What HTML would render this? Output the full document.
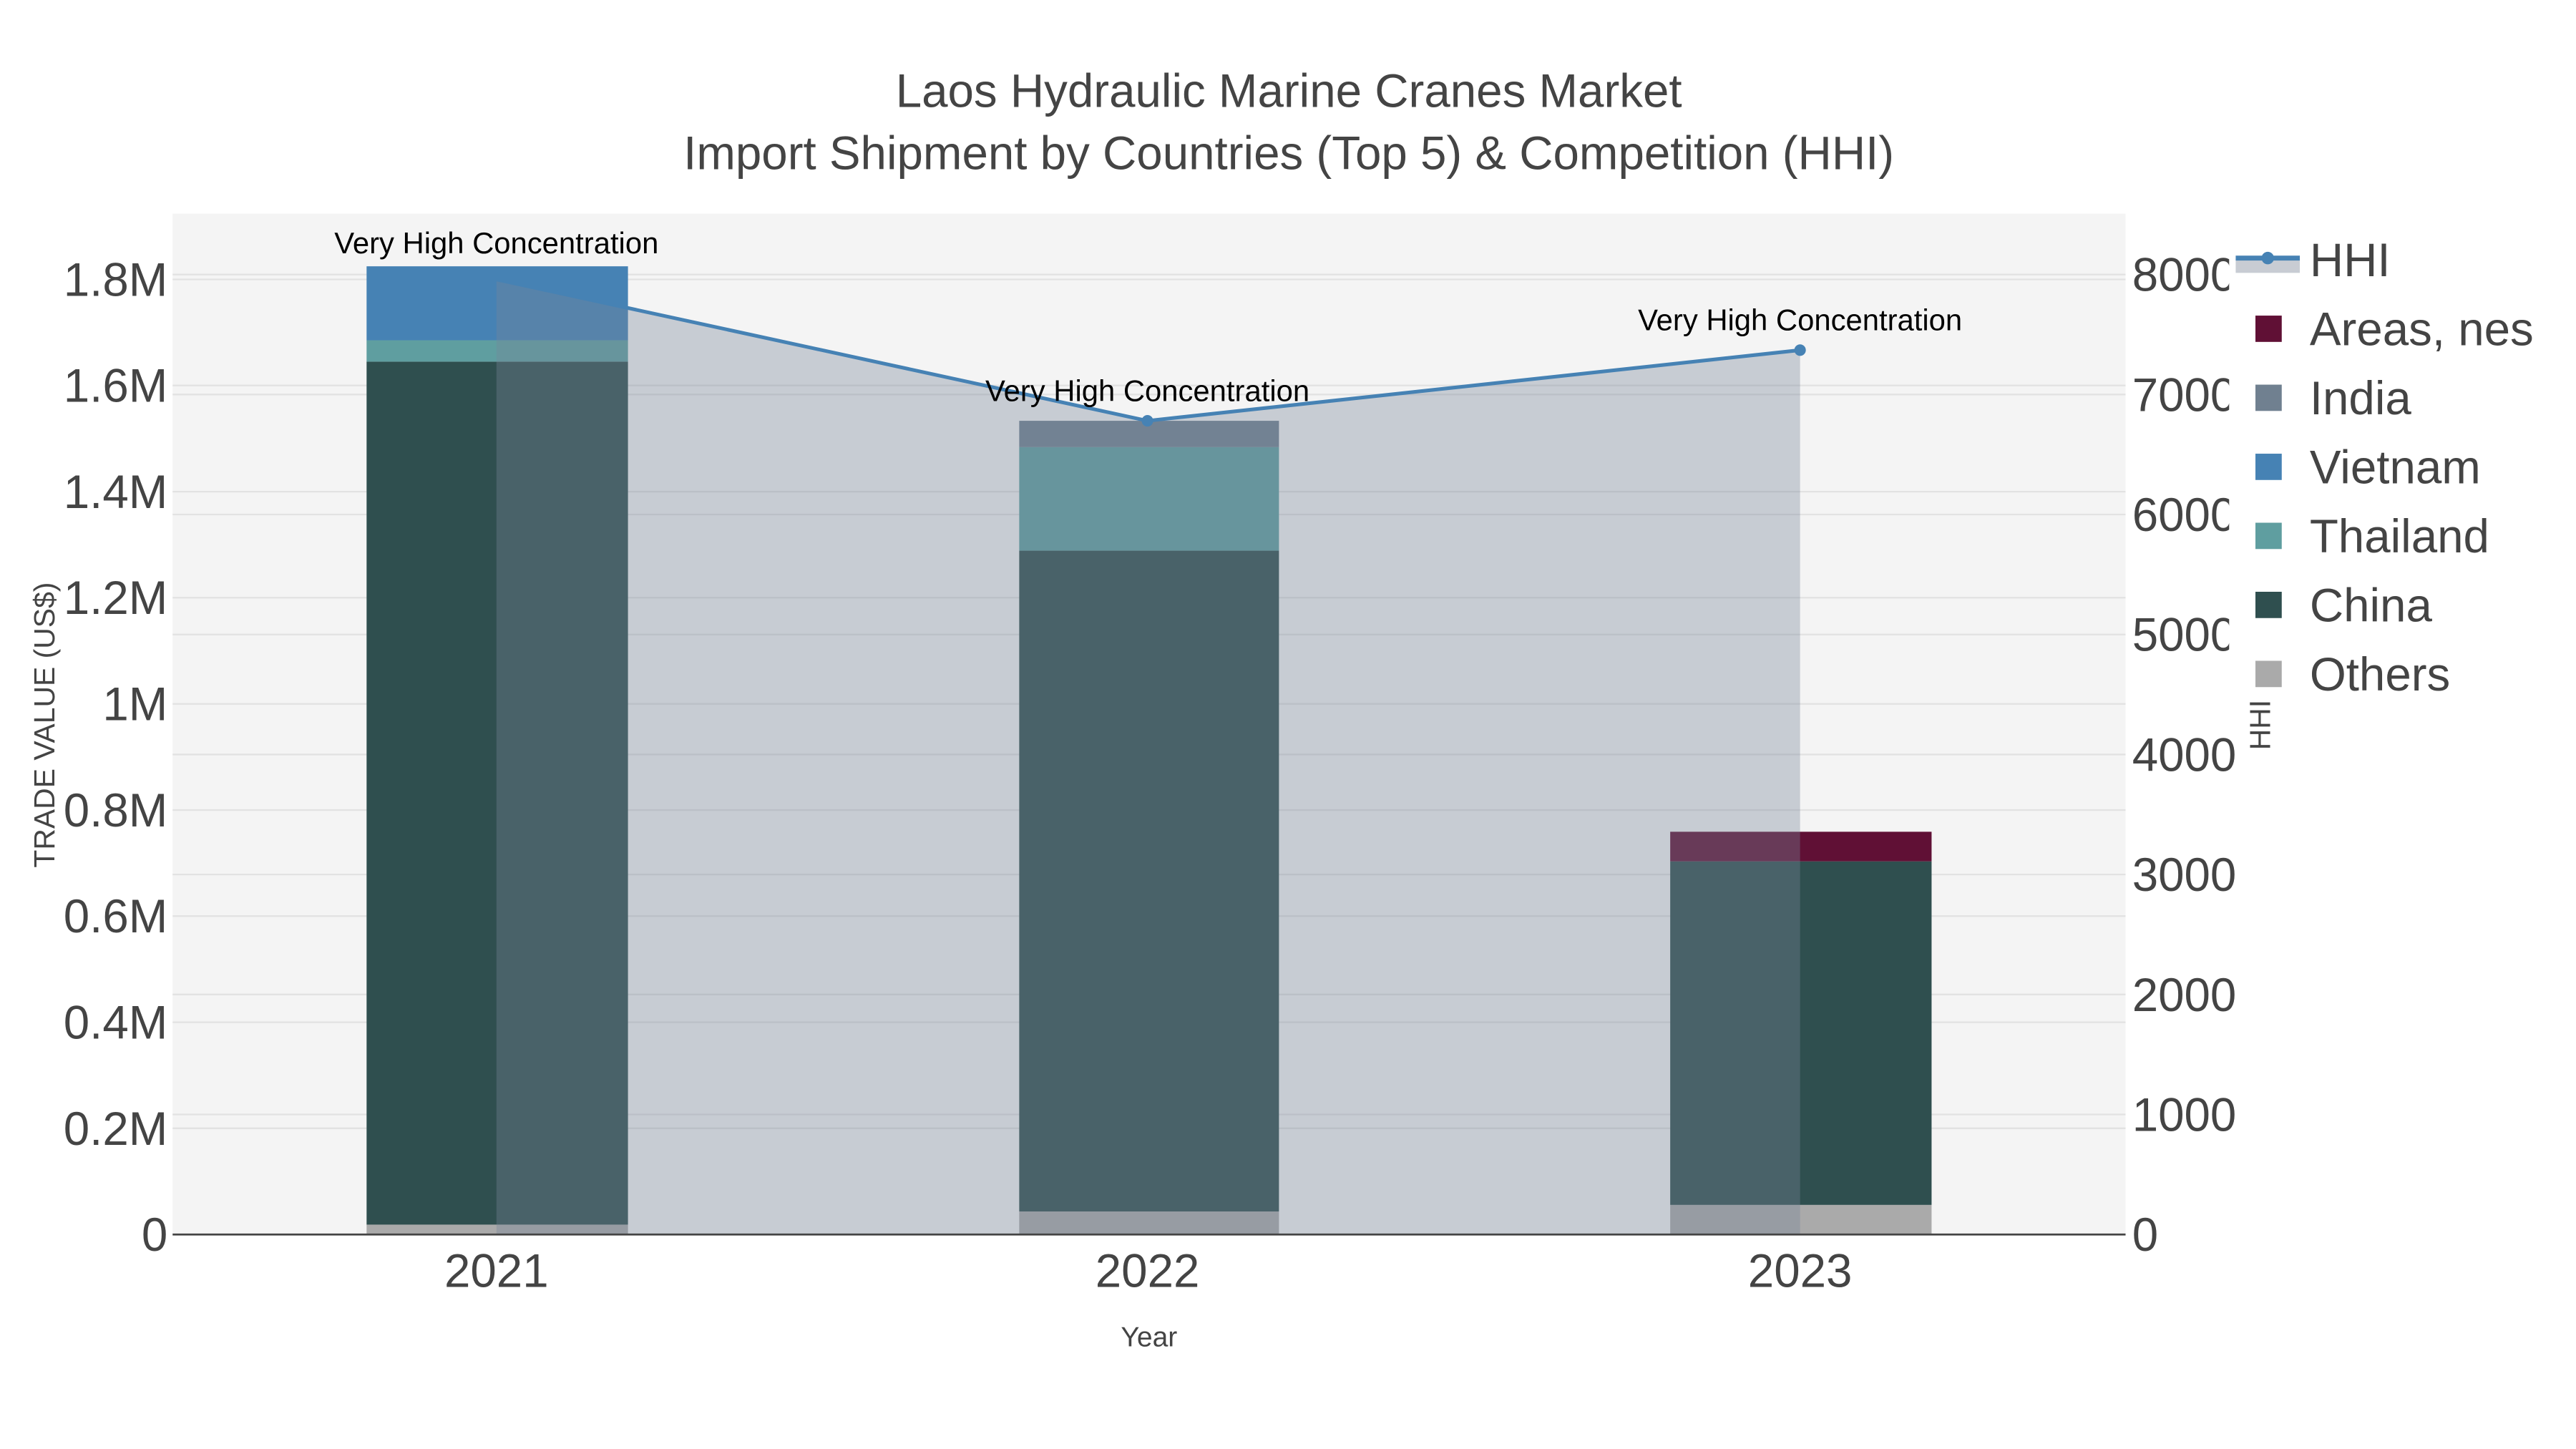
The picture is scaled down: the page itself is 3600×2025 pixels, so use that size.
<!DOCTYPE html>
<html><head><meta charset="utf-8"><style>html,body{margin:0;padding:0;background:#fff}svg{display:block}text{font-family:"Liberation Sans",sans-serif}</style></head>
<body>
<svg width="3600" height="2025" viewBox="0 0 1567 881.5" preserveAspectRatio="none" xmlns="http://www.w3.org/2000/svg">
<rect width="1567" height="881.5" fill="#fff"/>
<rect x="105" y="130" width="1188" height="621" fill="#f4f4f4"/>
<g stroke="#e2e2e2" stroke-width="1">
<line x1="105" x2="1293" y1="686.4" y2="686.4"/><line x1="105" x2="1293" y1="621.9" y2="621.9"/><line x1="105" x2="1293" y1="557.3" y2="557.3"/><line x1="105" x2="1293" y1="492.8" y2="492.8"/><line x1="105" x2="1293" y1="428.2" y2="428.2"/><line x1="105" x2="1293" y1="363.6" y2="363.6"/><line x1="105" x2="1293" y1="299.1" y2="299.1"/><line x1="105" x2="1293" y1="234.5" y2="234.5"/><line x1="105" x2="1293" y1="170" y2="170"/>
<line x1="105" x2="1293" y1="678" y2="678"/><line x1="105" x2="1293" y1="605" y2="605"/><line x1="105" x2="1293" y1="532" y2="532"/><line x1="105" x2="1293" y1="459" y2="459"/><line x1="105" x2="1293" y1="386" y2="386"/><line x1="105" x2="1293" y1="313" y2="313"/><line x1="105" x2="1293" y1="240" y2="240"/><line x1="105" x2="1293" y1="167" y2="167"/>
</g>
<rect x="223" y="745" width="159" height="6" fill="#aaaaaa"/>
<rect x="223" y="220" width="159" height="525" fill="#2f4f4f"/>
<rect x="223" y="207" width="159" height="13" fill="#5f9ea0"/>
<rect x="223" y="162" width="159" height="45" fill="#4682b4"/>
<rect x="620" y="737" width="158" height="14" fill="#aaaaaa"/>
<rect x="620" y="335" width="158" height="402" fill="#2f4f4f"/>
<rect x="620" y="272" width="158" height="63" fill="#5f9ea0"/>
<rect x="620" y="256" width="158" height="16" fill="#708090"/>
<rect x="1016" y="733" width="159" height="18" fill="#aaaaaa"/>
<rect x="1016" y="524" width="159" height="209" fill="#2f4f4f"/>
<rect x="1016" y="506" width="159" height="18" fill="#601035"/>
<polygon points="302,170 698,256 1095,213 1095,751 302,751" fill="rgb(118,132,152)" fill-opacity="0.36"/>
<polyline points="302,170 698,256 1095,213" fill="none" stroke="#4682b4" stroke-width="2.2"/>
<circle cx="698" cy="256" r="3.5" fill="#4682b4"/><circle cx="1095" cy="213" r="3.5" fill="#4682b4"/>
<line x1="105" x2="1293" y1="751" y2="751" stroke="#444" stroke-width="1.2"/>
<g font-size="18.2" fill="#000" text-anchor="middle">
<text x="302" y="154">Very High Concentration</text>
<text x="698" y="244">Very High Concentration</text>
<text x="1095" y="201">Very High Concentration</text>
</g>
<g fill="#444" font-size="28.5" text-anchor="middle">
<text x="784" y="65">Laos Hydraulic Marine Cranes Market</text>
<text x="784" y="103">Import Shipment by Countries (Top 5) &amp; Competition (HHI)</text>
</g>
<g fill="#444" font-size="28.5" text-anchor="end">
<text x="102" y="761">0</text><text x="102" y="696.4">0.2M</text><text x="102" y="631.9">0.4M</text><text x="102" y="567.3">0.6M</text><text x="102" y="502.8">0.8M</text><text x="102" y="438.2">1M</text><text x="102" y="373.6">1.2M</text><text x="102" y="309.1">1.4M</text><text x="102" y="244.5">1.6M</text><text x="102" y="180">1.8M</text>
</g>
<g fill="#444" font-size="28.5">
<text x="1297" y="761">0</text><text x="1297" y="688">1000</text><text x="1297" y="615">2000</text><text x="1297" y="542">3000</text><text x="1297" y="469">4000</text><text x="1297" y="396">5000</text><text x="1297" y="323">6000</text><text x="1297" y="250">7000</text><text x="1297" y="177">8000</text>
</g>
<g fill="#444" font-size="28.5" text-anchor="middle">
<text x="302" y="783">2021</text><text x="698" y="783">2022</text><text x="1095" y="783">2023</text>
</g>
<text x="699" y="819" fill="#444" font-size="17" text-anchor="middle">Year</text>
<text transform="translate(33,441) rotate(-90)" fill="#444" font-size="17.8" text-anchor="middle">TRADE VALUE (US$)</text>
<rect x="1356" y="130" width="211" height="310" fill="#fff"/>
<text transform="translate(1381,441) rotate(-90)" fill="#444" font-size="17.8" text-anchor="middle">HHI</text>
<rect x="1360" y="158" width="39" height="8" fill="#c8ccd3"/>
<line x1="1360" x2="1399" y1="157" y2="157" stroke="#4682b4" stroke-width="3"/>
<circle cx="1379.5" cy="157" r="3.8" fill="#4682b4"/>
<rect x="1372" y="192" width="16" height="16" fill="#601035"/>
<rect x="1372" y="234" width="16" height="16" fill="#708090"/>
<rect x="1372" y="276" width="16" height="16" fill="#4682b4"/>
<rect x="1372" y="318" width="16" height="16" fill="#5f9ea0"/>
<rect x="1372" y="360" width="16" height="16" fill="#2f4f4f"/>
<rect x="1372" y="402" width="16" height="16" fill="#aaaaaa"/>
<g fill="#444" font-size="28.5">
<text x="1405" y="168">HHI</text><text x="1405" y="210">Areas, nes</text><text x="1405" y="252">India</text><text x="1405" y="294">Vietnam</text><text x="1405" y="336">Thailand</text><text x="1405" y="378">China</text><text x="1405" y="420">Others</text>
</g>
</svg>
</body></html>
